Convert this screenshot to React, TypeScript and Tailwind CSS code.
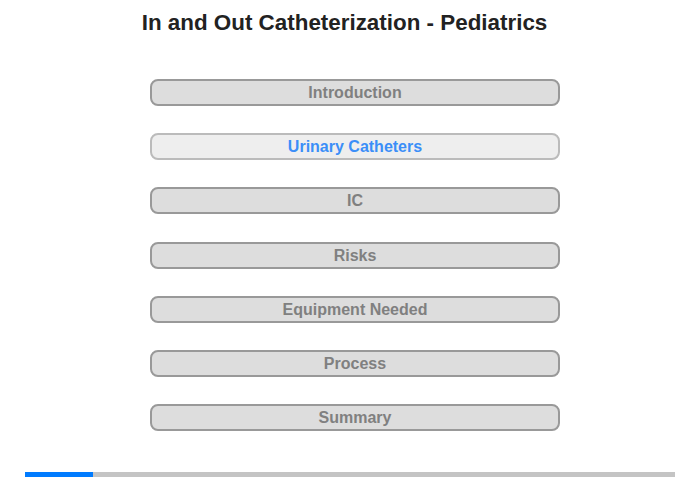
const sections = [
  "Introduction",
  "Urinary Catheters",
  "IC",
  "Risks",
  "Equipment Needed",
  "Process",
  "Summary"
];

const activeIndex = 1;

export default function App(): JSX.Element {
  return (
    <div className="flex h-[480px] w-[700px] flex-col bg-white font-['Liberation_Sans',Arial,sans-serif]">
      <h1 className="mt-[9px] h-[28px] pr-[11px] text-center text-[22.4px] font-bold leading-[28px] text-[#222]">
        In and Out Catheterization - Pediatrics
      </h1>
      <nav className="ml-[150px] mt-[42px] flex w-[410px] flex-col gap-[27.2px]">
        {sections.map((label, i) => {
          const active = i === activeIndex;
          return (
            <button
              key={label}
              type="button"
              className={
                active
                  ? "h-[27px] rounded-[8px] border-2 border-[#bbb] bg-[#eee] text-[16px] font-bold leading-[23px] text-[#3b8ef8]"
                  : "h-[27px] rounded-[8px] border-2 border-[#999] bg-[#ddd] text-[16px] font-bold leading-[23px] text-[#808080]"
              }
            >
              {label}
            </button>
          );
        })}
      </nav>
      <div className="mx-[25px] mt-auto mb-[3px] flex h-[5px] bg-[#c4c4c4]">
        <div className="w-[68px] bg-[#007bff]" />
      </div>
    </div>
  );
}
